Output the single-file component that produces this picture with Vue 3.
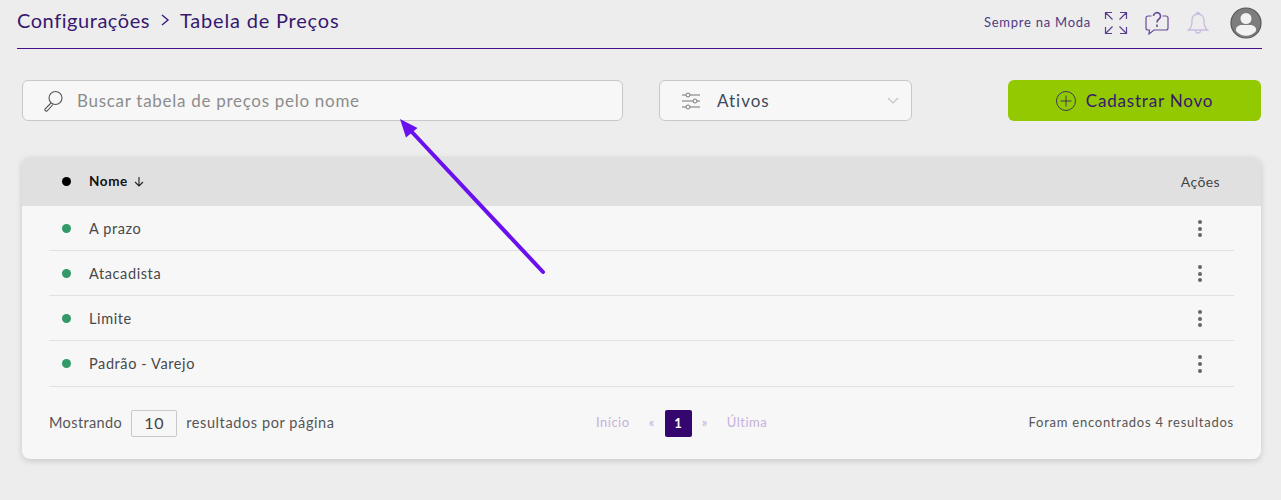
<script setup>
const rows = ['A prazo', 'Atacadista', 'Limite', 'Padrão - Varejo']
</script>

<template>
  <div class="page">
    <header class="topbar">
      <div class="crumbs">
        <span class="crumb-root">Configurações</span>
        <svg class="chev" width="10" height="14" viewBox="0 0 10 14"><path d="M2 2l6 5-6 5" fill="none" stroke="#3a1a78" stroke-width="1.4"/></svg>
        <span>Tabela de Preços</span>
      </div>
      <div class="tools">
        <span class="company">Sempre na Moda</span>
        <svg class="ic-expand" width="24" height="24" viewBox="0 0 24 24" fill="none" stroke="#5b3d8f" stroke-width="1.2">
          <path d="M1.500 8V1.500H8M1.500 1.500l7 7M16 1.500h6.500V8M22.500 1.500l-7 7M1.500 16v6.500H8M1.500 22.500l7-7M22.500 16v6.500H16M22.500 22.500l-7-7"/>
        </svg>
        <svg class="ic-help" width="24" height="24" viewBox="0 0 24 24" fill="none" stroke="#6a4a9c" stroke-width="1.2">
          <path d="M6.500 5H3a2 2 0 0 0-2 2v10a2 2 0 0 0 2 2h1.500l-.5 4 5-4h12a2 2 0 0 0 2-2V7a2 2 0 0 0-2-2h-3.500"/>
          <path d="M8.500 5a3.500 3.500 0 1 1 5.500 3c-1.300.9-2 1.500-2 3.500M12 13.500v2.500" stroke-width="1.600"/>
        </svg>
        <svg class="ic-bell" width="22" height="24" viewBox="0 0 22 24" fill="none" stroke="#c9bcdf" stroke-width="1.300">
          <path d="M11 3c-4 0-6 3-6 7 0 5-1 7-3.500 9h19C18 17 17 15 17 10c0-4-2-7-6-7zM9.500 3a1.500 1.500 0 0 1 3 0M8.500 19.500a2.500 2.500 0 0 0 5 0"/>
        </svg>
        <svg class="avatar" width="32" height="32" viewBox="0 0 32 32">
          <circle cx="16" cy="16" r="15" fill="#7d7d7d" stroke="#555" stroke-width="1.200"/>
          <circle cx="16" cy="11.500" r="5.500" fill="#f2f2f2"/>
          <path d="M6 22.500c0-3 3-4.500 6-4.500h8c3 0 6 1.500 6 4.500V24a13 13 0 0 1-20 0z" fill="#f2f2f2"/>
        </svg>
      </div>
    </header>

    <section class="filters">
      <label class="field search">
        <svg width="22" height="22" viewBox="0 0 22 22" fill="none" stroke="#555" stroke-width="1.100">
          <circle cx="13.500" cy="8" r="6.500"/>
          <path d="M9 13l-6 6a1.500 1.500 0 0 0 2 2l6-6.500"/>
        </svg>
        <span class="ph">Buscar tabela de preços pelo nome</span>
      </label>
      <div class="field status">
        <svg width="20" height="18" viewBox="0 0 20 18" fill="none" stroke="#777" stroke-width="1">
          <path d="M1 3h4M9 3h10M1 9h11M16 9h3M1 15h4M9 15h10"/>
          <circle cx="7" cy="3" r="2"/><circle cx="14" cy="9" r="2"/><circle cx="7" cy="15" r="2"/>
        </svg>
        <span class="status-label">Ativos</span>
        <svg class="caret" width="12" height="8" viewBox="0 0 12 8"><path d="M1 1l5 5 5-5" fill="none" stroke="#c4c4c4" stroke-width="1.200"/></svg>
      </div>
      <button class="add">
        <svg width="20" height="20" viewBox="0 0 20 20" fill="none" stroke="#3f3a55" stroke-width="1"><circle cx="10" cy="10" r="9.500"/><path d="M10 4.500v11M4.500 10h11"/></svg>
        <span>Cadastrar Novo</span>
      </button>
    </section>

    <section class="card">
      <div class="thead">
        <span class="dot black"></span>
        <span class="th-name">Nome</span>
        <svg width="10" height="10" viewBox="0 0 10 10" fill="none" stroke="#222" stroke-width="1.100"><path d="M5 0v9M1 5l4 4 4-4"/></svg>
        <span class="th-actions">Ações</span>
      </div>
      <div class="tbody">
        <div v-for="r in rows" :key="r" class="row">
          <span class="dot green"></span>
          <span class="name">{{ r }}</span>
          <span class="more"><i></i><i></i><i></i></span>
        </div>
      </div>
      <div class="tfoot">
        <div class="per-page">
          <span class="lift showing">Mostrando</span>
          <span class="size">10</span>
          <span class="lift">resultados por página</span>
        </div>
        <div class="pager">
          <span class="lift">Início</span>
          <span class="arr lift">«</span>
          <span class="current">1</span>
          <span class="arr after lift">»</span>
          <span class="lift">Última</span>
        </div>
        <div class="total lift">Foram encontrados 4 resultados</div>
      </div>
    </section>

    <svg class="arrow" width="1281" height="500" viewBox="0 0 1281 500">
      <path d="M543 272L411 131" stroke="#6a10ee" stroke-width="4" stroke-linecap="round" fill="none"/>
      <path d="M400 119l17.500 9-11.500 9.500z" fill="#6a10ee"/>
    </svg>
  </div>
</template>

<style>
html, body { background: #ededed; }
</style>

<style scoped>
.page {
  position: relative;
  width: 1281px;
  height: 500px;
  background: #ededed;
  font-family: Lato, "Noto Sans", sans-serif;
  letter-spacing: .6px;
  overflow: hidden;
  color: #444;
}
.topbar {
  margin: 0 19px 0 17px;
  height: 49px;
  box-sizing: border-box;
  border-bottom: 1px solid #45108c;
  display: flex;
  align-items: center;
  justify-content: space-between;
}
.crumbs {
  display: flex;
  align-items: center;
  gap: 10px;
  font-size: 20px;
  letter-spacing: .8px;
  color: #36186f;
  margin-top: -8px;
}
.crumb-root { letter-spacing: .55px; }
.tools { display: flex; align-items: center; margin-top: -3px; }
.company { font-size: 13px; letter-spacing: .75px; color: #4f3b80; margin-right: 13px; margin-top: -2px; }
.ic-expand { margin-right: 17px; }
.ic-help { margin-right: 18px; }
.ic-bell { margin-right: 21px; }
.filters {
  display: flex;
  margin: 31px 20px 0 22px;
  height: 42px;
}
.field {
  box-sizing: border-box;
  height: 41px;
  background: #f7f7f7;
  border: 1px solid #c8c8c8;
  border-radius: 6px;
  display: flex;
  align-items: center;
}
.search { width: 601px; padding-left: 19px; gap: 13px; }
.ph { color: #8c8c8c; font-size: 17px; letter-spacing: .71px; }
.status { width: 253px; margin-left: 36px; padding-left: 21px; }
.status-label { font-size: 17px; letter-spacing: 1px; color: #3e4a5c; margin-left: 16px; }
.caret { margin-left: auto; margin-right: 12px; }
.add {
  box-sizing: border-box;
  width: 253px;
  height: 41px;
  margin-left: 96px;
  border: 0;
  border-radius: 6px;
  background: #93c900;
  display: flex;
  align-items: center;
  justify-content: center;
  gap: 10px;
  font: inherit;
  letter-spacing: .8px;
  font-size: 17px;
  color: #36186f;
  padding: 0;
}
.card {
  margin: 35px 20px 0 22px;
  height: 302px;
  background: #f7f7f7;
  border-radius: 8px;
  box-shadow: 0 2px 6px rgba(0, 0, 0, .16);
  overflow: hidden;
}
.thead {
  height: 49px;
  background: #e0e0e0;
  display: flex;
  align-items: center;
  padding: 0 41px 0 40px;
}
.dot { width: 9px; height: 9px; border-radius: 50%; flex: none; }
.black { background: #000; }
.green { background: #339966; }
.th-name { font-size: 13.500px; font-weight: 700; color: #111; margin-left: 18px; margin-right: 6px; margin-top: -1px; }
.th-actions { margin-left: auto; font-size: 14px; letter-spacing: .4px; color: #444; margin-top: -1px; }
.tbody { margin: 0 27px; }
.row {
  box-sizing: border-box;
  height: 45px;
  border-bottom: 1px solid #e1e1e1;
  display: flex;
  align-items: center;
  padding-left: 13px;
}
.row:last-child { height: 46px; }
.name { font-size: 14.500px; color: #484848; margin-left: 18px; }
.more {
  margin-left: auto;
  margin-right: 32px;
  margin-top: 1px;
  display: flex;
  flex-direction: column;
  gap: 2.670px;
}
.more i { width: 4px; height: 4px; border-radius: 50%; background: #666; display: block; }
.tfoot {
  margin: 0 27px;
  height: 73px;
  display: flex;
  align-items: center;
  font-size: 14.500px;
  color: #555;
}
.lift { margin-top: -3px; }
.showing { letter-spacing: .38px; }
.per-page { display: flex; align-items: center; gap: 9px; flex: 0 0 547px; }
.size {
  box-sizing: border-box;
  width: 46px;
  height: 27px;
  border: 1px solid #c8c8c8;
  display: flex;
  align-items: center;
  justify-content: center;
  padding-bottom: 3px;
  border-radius: 2px;
  font-size: 16px;
  color: #444;
}
.pager { display: flex; align-items: center; color: #c3b2dc; font-size: 13px; letter-spacing: .5px; flex: none; }
.arr { margin: -3px 10px 0 19px; }
.arr.after { margin: -3px 19px 0 10px; }
.current {
  width: 27px;
  height: 27px;
  padding-bottom: 2px;
  box-sizing: border-box;
  border-radius: 2px;
  background: #36066f;
  color: #fff;
  font-weight: 700;
  display: flex;
  align-items: center;
  justify-content: center;
}
.total { flex: 1; text-align: right; font-size: 13px; letter-spacing: .75px; }
.arrow { position: absolute; left: 0; top: 0; pointer-events: none; }
</style>
